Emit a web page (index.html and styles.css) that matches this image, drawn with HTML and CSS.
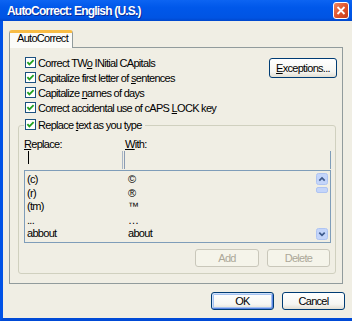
FILE: index.html
```html
<!DOCTYPE html>
<html>
<head>
<meta charset="utf-8">
<link rel="stylesheet" href="styles.css">
</head>
<body>
<div class="window">
  <div class="titlebar">
    <span class="title">AutoCorrect: English (U.S.)</span>
    <span class="close">
      <svg width="16" height="17" viewBox="0 0 16 17">
        <defs>
          <linearGradient id="cg" x1="0" y1="0" x2="1" y2="1">
            <stop offset="0" stop-color="#F08A66"/>
            <stop offset="0.5" stop-color="#E0552E"/>
            <stop offset="1" stop-color="#C23A18"/>
          </linearGradient>
        </defs>
        <rect x="0.5" y="0.5" width="15" height="16" rx="2.5" fill="url(#cg)" stroke="#FFFFFF"/>
        <path d="M4.5 5 L11.5 12 M11.5 5 L4.5 12" stroke="#FFFFFF" stroke-width="1.8" fill="none"/>
      </svg>
    </span>
  </div>
  <div class="frame">
    <div class="tabs"><div class="tab">AutoCorrect</div></div>
    <div class="panel">
      <div class="top">
        <div class="opts">
          <div class="opt"><span class="cb"><svg width="11" height="11" viewBox="0 0 11 11"><rect x="0.5" y="0.5" width="10" height="10" fill="#FFFFFF" stroke="#1C5180"/><path d="M2.4 5.2 L4.4 7.4 L8.6 3.2" fill="none" stroke="#21A121" stroke-width="1.8"/></svg></span><span>Correct TW<u>o</u> INitial CApitals</span></div>
          <div class="opt"><span class="cb"><svg width="11" height="11" viewBox="0 0 11 11"><rect x="0.5" y="0.5" width="10" height="10" fill="#FFFFFF" stroke="#1C5180"/><path d="M2.4 5.2 L4.4 7.4 L8.6 3.2" fill="none" stroke="#21A121" stroke-width="1.8"/></svg></span><span>Capitalize first letter of <u>s</u>entences</span></div>
          <div class="opt"><span class="cb"><svg width="11" height="11" viewBox="0 0 11 11"><rect x="0.5" y="0.5" width="10" height="10" fill="#FFFFFF" stroke="#1C5180"/><path d="M2.4 5.2 L4.4 7.4 L8.6 3.2" fill="none" stroke="#21A121" stroke-width="1.8"/></svg></span><span>Capitalize <u>n</u>ames of days</span></div>
          <div class="opt"><span class="cb"><svg width="11" height="11" viewBox="0 0 11 11"><rect x="0.5" y="0.5" width="10" height="10" fill="#FFFFFF" stroke="#1C5180"/><path d="M2.4 5.2 L4.4 7.4 L8.6 3.2" fill="none" stroke="#21A121" stroke-width="1.8"/></svg></span><span>Correct accidental use of cAPS <u>L</u>OCK key</span></div>
        </div>
        <button class="btn exc"><u>E</u>xceptions...</button>
      </div>
      <fieldset class="group">
        <legend class="legend"><span class="cb"><svg width="11" height="11" viewBox="0 0 11 11"><rect x="0.5" y="0.5" width="10" height="10" fill="#FFFFFF" stroke="#1C5180"/><path d="M2.4 5.2 L4.4 7.4 L8.6 3.2" fill="none" stroke="#21A121" stroke-width="1.8"/></svg></span><span>Replace <u>t</u>ext as you type</span></legend>
        <div class="labels"><span><u>R</u>eplace:</span><span><u>W</u>ith:</span></div>
        <div class="inputs">
          <div class="in-rep"><span class="caret"></span></div>
          <div class="in-with"></div>
        </div>
        <div class="list">
          <div class="rows">
            <div class="row"><span>(c)</span><span>©</span></div>
            <div class="row"><span>(r)</span><span>®</span></div>
            <div class="row"><span>(tm)</span><span>™</span></div>
            <div class="row"><span>...</span><span>…</span></div>
            <div class="row"><span>abbout</span><span>about</span></div>
          </div>
          <div class="sb">
            <span class="sbbtn"><svg width="12" height="12" viewBox="0 0 12 12"><rect x="0.5" y="0.5" width="11" height="11" rx="2" fill="#C4D5FA" stroke="#AFC4F2"/><path d="M3.3 7.6 L6 4.9 L8.7 7.6" fill="none" stroke="#3E5A8C" stroke-width="1.7"/></svg></span>
            <span class="thumb"></span>
            <span class="sbbtn down"><svg width="12" height="12" viewBox="0 0 12 12"><rect x="0.5" y="0.5" width="11" height="11" rx="2" fill="#C4D5FA" stroke="#AFC4F2"/><path d="M3.3 4.6 L6 7.3 L8.7 4.6" fill="none" stroke="#3E5A8C" stroke-width="1.7"/></svg></span>
          </div>
        </div>
        <div class="actions">
          <button class="btn dis add">Add</button>
          <button class="btn dis del">Delete</button>
        </div>
      </fieldset>
    </div>
    <div class="footer">
      <button class="btn def">OK</button>
      <button class="btn">Cancel</button>
    </div>
  </div>
</div>
</body>
</html>
```
FILE: styles.css
```css
* { box-sizing: border-box; }
html, body { margin: 0; padding: 0; }
body {
  width: 352px;
  height: 321px;
  overflow: hidden;
  font-family: "Liberation Sans", Arial, sans-serif;
  font-size: 11px;
  letter-spacing: -0.7px;
  color: #000;
  background: #F0EEE4;
}
.window {
  width: 352px;
  height: 321px;
  display: flex;
  flex-direction: column;
}
.titlebar {
  height: 21px;
  flex: none;
  display: flex;
  align-items: flex-start;
  padding-left: 7px;
  background: linear-gradient(#0C64F2 0%, #0058EA 35%, #0054E3 85%, #0046CC 100%);
}
.title {
  margin-top: 4px;
  font-weight: bold;
  font-size: 12px;
  letter-spacing: -0.8px;
  line-height: 15px;
  color: #FFFFFF;
  text-shadow: 1px 1px 0 #0A2A96;
  white-space: nowrap;
}
.close {
  display: block;
  margin-left: auto;
  margin-right: 3px;
  margin-top: 2px;
  width: 16px;
  height: 17px;
}
.close svg, .cb svg, .sbbtn svg { display: block; }
.frame {
  flex: 1;
  display: flex;
  flex-direction: column;
  padding: 9px 7px 8px 6px;
  border-left: 3px solid #0052E6;
  border-bottom: 3px solid #004AD6;
  background: #F0EEE4;
}
.tabs {
  display: flex;
  height: 18px;
  margin-bottom: -1px;
  position: relative;
  z-index: 1;
}
.tab {
  width: 64px;
  height: 18px;
  padding-left: 7px;
  line-height: 10px;
  border: 1px solid #919B9C;
  border-top: 3px solid #F8BC45;
  border-bottom: none;
  border-radius: 3px 3px 0 0;
  background: #FBFBF8;
  white-space: nowrap;
}
.panel {
  width: 334px;
  height: 237px;
  padding-top: 9px;
  border: 1px solid #919B9C;
  background: #F0EEE4;
  display: flex;
  flex-direction: column;
}
.top {
  display: flex;
  align-items: flex-start;
}
.opts {
  flex: 1;
  padding-left: 15px;
  display: flex;
  flex-direction: column;
}
.opt {
  display: flex;
  align-items: flex-start;
  gap: 2px;
  height: 15px;
  line-height: 12px;
  white-space: nowrap;
}
.cb {
  display: block;
  flex: none;
  width: 11px;
  height: 11px;
}
.btn {
  font: inherit;
  font-size: 11px;
  letter-spacing: inherit;
  color: #000;
  height: 18px;
  padding: 0;
  line-height: 16px;
  text-align: center;
  border: 1px solid #003C74;
  border-radius: 3px;
  background: linear-gradient(#FFFFFF 0%, #F6F6F2 70%, #E2DED3 100%);
}
.exc {
  flex: none;
  width: 68px;
  height: 20px;
  line-height: 18px;
  margin: 1px 5px 0 0;
}
.group {
  margin: 2px 6px 0 8px;
  padding: 7px 4px 6px 5px;
  border: 1px solid #D0D0BF;
  border-radius: 3px;
  min-width: 0;
}
.legend {
  display: flex;
  align-items: flex-start;
  gap: 2px;
  height: 12px;
  line-height: 12px;
  padding: 0 3px 0 0;
  white-space: nowrap;
}
.legend .cb { margin-left: 1px; }
.labels {
  display: grid;
  grid-template-columns: 101px 1fr;
  height: 13px;
  line-height: 13px;
}
.inputs {
  display: flex;
  height: 18px;
}
.in-rep {
  width: 99px;
  padding-left: 4px;
  border-right: 1px solid #A9B6C6;
}
.caret {
  display: block;
  width: 1px;
  height: 13px;
  background: #000;
}
.in-with {
  flex: 1;
  margin-left: 1px;
  border-left: 1px solid #8A9BB3;
  border-right: 1px solid #7F9DB9;
}
.list {
  margin-top: 1px;
  height: 73px;
  display: flex;
  border: 1px solid #7F9DB9;
}
.rows {
  flex: 1;
  padding: 2px 0 0 2px;
}
.row {
  display: grid;
  grid-template-columns: 101px 1fr;
  height: 13.5px;
  line-height: 13.5px;
  white-space: nowrap;
}
.sb {
  flex: none;
  width: 14px;
  padding: 2px 2px 2px 0;
  display: flex;
  flex-direction: column;
}
.sbbtn {
  display: block;
  width: 12px;
  height: 12px;
}
.sbbtn.down { margin-top: auto; }
.thumb {
  display: block;
  width: 12px;
  height: 6px;
  margin-top: 2px;
  border: 1px solid #AFC4F2;
  border-radius: 2px;
  background: #C4D5FA;
}
.actions {
  margin-top: 6px;
  padding-right: 1px;
  display: flex;
  justify-content: flex-end;
  gap: 8px;
}
.dis {
  color: #ACA899;
  border-color: #C9C7BA;
  background: #F5F4EA;
}
.add { width: 64px; }
.del { width: 63px; }
.footer {
  margin-top: 8px;
  display: flex;
  justify-content: flex-end;
  gap: 8px;
}
.footer .btn { width: 63px; }
.def {
  box-shadow: inset 1px 1px 0 #CEE0FA, inset -1px -1px 0 #5C86E4, inset 0 0 0 2px #A5C2F0;
}
```
